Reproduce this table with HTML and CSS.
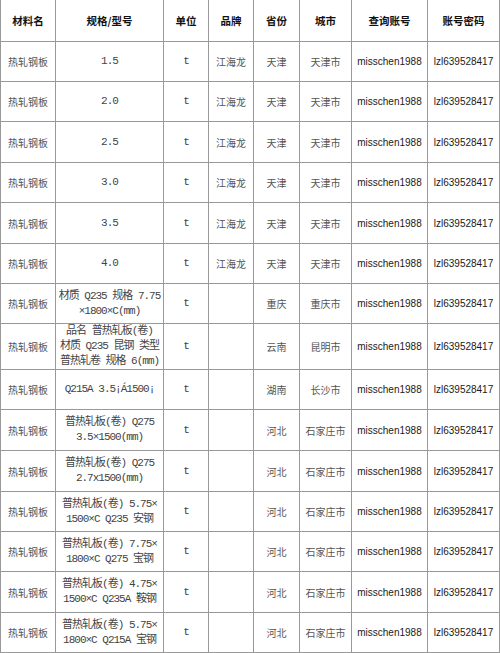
FILE: index.html
```html
<!DOCTYPE html>
<html lang="zh">
<head>
<meta charset="utf-8">
<title>热轧钢板</title>
<link rel="stylesheet" href="styles.css">
</head>
<body>
<div class="sheet">
  <div class="row head">
    <div class="c">材料名</div><div class="c">规格/型号</div><div class="c">单位</div><div class="c">品牌</div><div class="c">省份</div><div class="c">城市</div><div class="c">查询账号</div><div class="c">账号密码</div>
  </div>
  <div class="row">
    <div class="c cn">热轧钢板</div><div class="c spec">1.5</div><div class="c spec">t</div><div class="c cn">江海龙</div><div class="c cn">天津</div><div class="c cn">天津市</div><div class="c acct">misschen1988</div><div class="c acct">lzl639528417</div>
  </div>
  <div class="row">
    <div class="c cn">热轧钢板</div><div class="c spec">2.0</div><div class="c spec">t</div><div class="c cn">江海龙</div><div class="c cn">天津</div><div class="c cn">天津市</div><div class="c acct">misschen1988</div><div class="c acct">lzl639528417</div>
  </div>
  <div class="row">
    <div class="c cn">热轧钢板</div><div class="c spec">2.5</div><div class="c spec">t</div><div class="c cn">江海龙</div><div class="c cn">天津</div><div class="c cn">天津市</div><div class="c acct">misschen1988</div><div class="c acct">lzl639528417</div>
  </div>
  <div class="row">
    <div class="c cn">热轧钢板</div><div class="c spec">3.0</div><div class="c spec">t</div><div class="c cn">江海龙</div><div class="c cn">天津</div><div class="c cn">天津市</div><div class="c acct">misschen1988</div><div class="c acct">lzl639528417</div>
  </div>
  <div class="row">
    <div class="c cn">热轧钢板</div><div class="c spec">3.5</div><div class="c spec">t</div><div class="c cn">江海龙</div><div class="c cn">天津</div><div class="c cn">天津市</div><div class="c acct">misschen1988</div><div class="c acct">lzl639528417</div>
  </div>
  <div class="row">
    <div class="c cn">热轧钢板</div><div class="c spec">4.0</div><div class="c spec">t</div><div class="c cn">江海龙</div><div class="c cn">天津</div><div class="c cn">天津市</div><div class="c acct">misschen1988</div><div class="c acct">lzl639528417</div>
  </div>
  <div class="row">
    <div class="c cn">热轧钢板</div><div class="c spec">材质 Q235 规格 7.75<br>×1800×C(mm)</div><div class="c spec">t</div><div class="c cn"></div><div class="c cn">重庆</div><div class="c cn">重庆市</div><div class="c acct">misschen1988</div><div class="c acct">lzl639528417</div>
  </div>
  <div class="row">
    <div class="c cn">热轧钢板</div><div class="c spec">品名 普热轧板(卷)<br>材质 Q235 昆钢 类型<br>普热轧卷 规格 6(mm)</div><div class="c spec">t</div><div class="c cn"></div><div class="c cn">云南</div><div class="c cn">昆明市</div><div class="c acct">misschen1988</div><div class="c acct">lzl639528417</div>
  </div>
  <div class="row">
    <div class="c cn">热轧钢板</div><div class="c spec">Q215A 3.5¡Á1500¡</div><div class="c spec">t</div><div class="c cn"></div><div class="c cn">湖南</div><div class="c cn">长沙市</div><div class="c acct">misschen1988</div><div class="c acct">lzl639528417</div>
  </div>
  <div class="row">
    <div class="c cn">热轧钢板</div><div class="c spec">普热轧板(卷) Q275<br>3.5×1500(mm)</div><div class="c spec">t</div><div class="c cn"></div><div class="c cn">河北</div><div class="c cn">石家庄市</div><div class="c acct">misschen1988</div><div class="c acct">lzl639528417</div>
  </div>
  <div class="row">
    <div class="c cn">热轧钢板</div><div class="c spec">普热轧板(卷) Q275<br>2.7x1500(mm)</div><div class="c spec">t</div><div class="c cn"></div><div class="c cn">河北</div><div class="c cn">石家庄市</div><div class="c acct">misschen1988</div><div class="c acct">lzl639528417</div>
  </div>
  <div class="row">
    <div class="c cn">热轧钢板</div><div class="c spec">普热轧板(卷) 5.75×<br>1500×C Q235 安钢</div><div class="c spec">t</div><div class="c cn"></div><div class="c cn">河北</div><div class="c cn">石家庄市</div><div class="c acct">misschen1988</div><div class="c acct">lzl639528417</div>
  </div>
  <div class="row">
    <div class="c cn">热轧钢板</div><div class="c spec">普热轧板(卷) 7.75×<br>1800×C Q275 宝钢</div><div class="c spec">t</div><div class="c cn"></div><div class="c cn">河北</div><div class="c cn">石家庄市</div><div class="c acct">misschen1988</div><div class="c acct">lzl639528417</div>
  </div>
  <div class="row">
    <div class="c cn">热轧钢板</div><div class="c spec">普热轧板(卷) 4.75×<br>1500×C Q235A 鞍钢</div><div class="c spec">t</div><div class="c cn"></div><div class="c cn">河北</div><div class="c cn">石家庄市</div><div class="c acct">misschen1988</div><div class="c acct">lzl639528417</div>
  </div>
  <div class="row">
    <div class="c cn">热轧钢板</div><div class="c spec">普热轧板(卷) 5.75×<br>1800×C Q215A 宝钢</div><div class="c spec">t</div><div class="c cn"></div><div class="c cn">河北</div><div class="c cn">石家庄市</div><div class="c acct">misschen1988</div><div class="c acct">lzl639528417</div>
  </div>
</div>
</body>
</html>
```

FILE: styles.css
```css
html, body {
  margin: 0;
  padding: 0;
  background: #ffffff;
}

.sheet {
  width: 500px;
  box-sizing: border-box;
  border-left: 1px solid #999999;
  display: grid;
  grid-template-columns: 55px 108px 45px 45px 46px 52px 76px 72px;
  grid-template-rows: 42px 40px 40px 41px 40px 41px 40px 40px 46px 40px 41px 41px 40px 40px 41px 40px;
}

.row {
  display: contents;
}

.c {
  box-sizing: border-box;
  border-right: 1px solid #999999;
  border-bottom: 1px solid #999999;
  display: flex;
  align-items: center;
  justify-content: center;
  text-align: center;
  white-space: nowrap;
  overflow: hidden;
  font-size: 10px;
  line-height: 15px;
  color: #4a4a4a;
  font-family: "Noto Sans CJK SC", sans-serif;
}

.head .c {
  font-family: "Noto Sans CJK SC", sans-serif;
  font-weight: 700;
  font-size: 10.5px;
  color: #111111;
}

.cn {
  font-family: "Noto Sans CJK SC", serif;
  font-weight: 400;
  color: #555555;
}

.spec {
  font-family: "Liberation Mono", "Noto Sans CJK SC", monospace;
  font-size: 11px;
  letter-spacing: -1px;
  color: #444444;
}

.acct {
  font-family: "Liberation Sans", Arial, sans-serif;
  color: #1a1a1a;
}
```
